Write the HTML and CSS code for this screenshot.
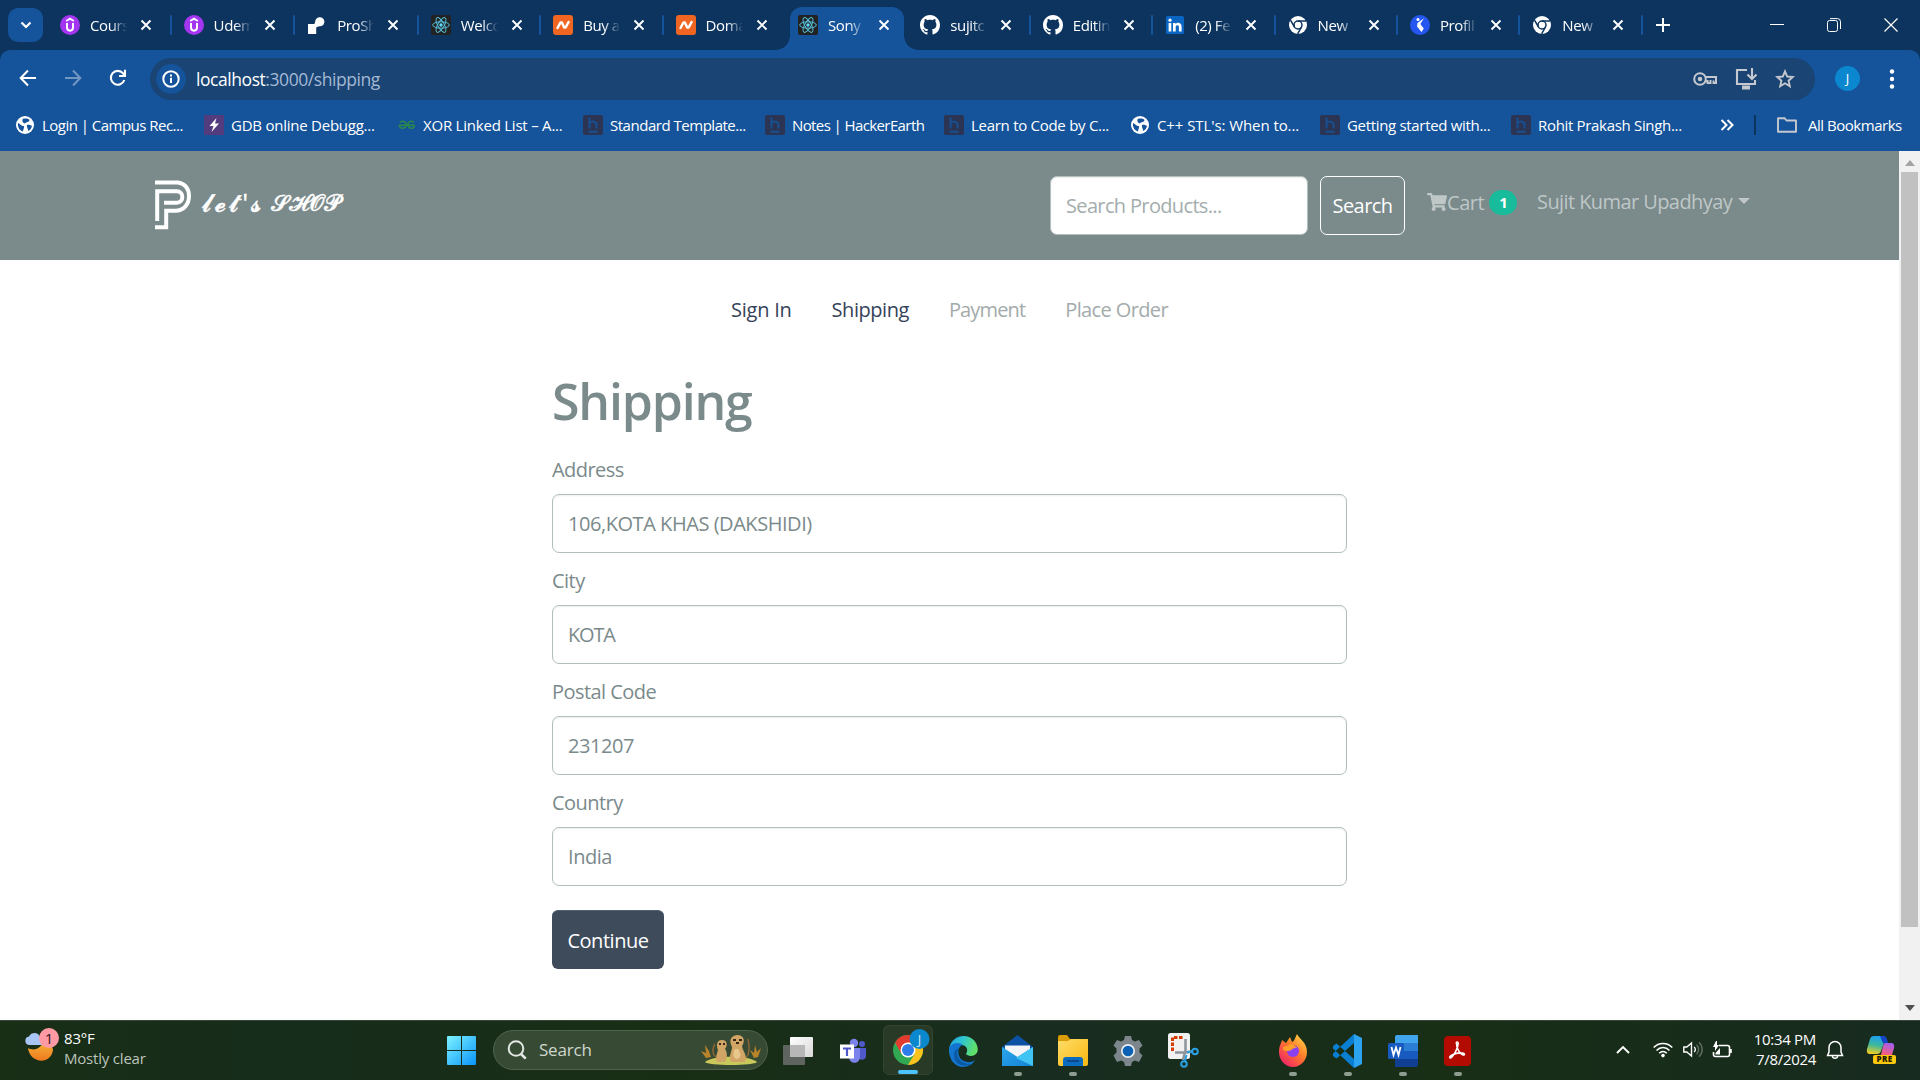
FILE: index.html
```html
<!DOCTYPE html>
<html lang="en">
<head>
<meta charset="utf-8">
<title>Shipping</title>
<link rel="stylesheet" href="styles.css">
</head>
<body>
<svg class="defs" width="0" height="0" aria-hidden="true">
  <defs>
    <linearGradient id="gWin" x1="0" y1="0" x2="1" y2="1"><stop offset="0" stop-color="#7df3ff"/><stop offset="1" stop-color="#0a94f8"/></linearGradient>
    <linearGradient id="gMoon" x1="0" y1="0" x2="0" y2="1"><stop offset="0" stop-color="#f6b73c"/><stop offset="1" stop-color="#ee7a1e"/></linearGradient>
    <linearGradient id="gEdge" x1="0" y1="0" x2="1" y2="0.3"><stop offset="0" stop-color="#1fa0e6"/><stop offset=".5" stop-color="#2fc5cf"/><stop offset="1" stop-color="#5fe06b"/></linearGradient>
    <linearGradient id="gMail" x1="0" y1="0" x2="1" y2="1"><stop offset="0" stop-color="#2aa6ea"/><stop offset="1" stop-color="#1583d6"/></linearGradient>
    <linearGradient id="gFold" x1="0" y1="0" x2="1" y2="1"><stop offset="0" stop-color="#ffdc6a"/><stop offset="1" stop-color="#f8b80f"/></linearGradient>
    <linearGradient id="gFox" x1="1" y1="0" x2="0.2" y2="1"><stop offset="0" stop-color="#ffe74a"/><stop offset=".5" stop-color="#ff7a2a"/><stop offset="1" stop-color="#f0206a"/></linearGradient>
    <linearGradient id="gCopA" x1="0.5" y1="0" x2="0.3" y2="1"><stop offset="0" stop-color="#1ea0f0"/><stop offset=".5" stop-color="#3cb89a"/><stop offset="1" stop-color="#f5cf1e"/></linearGradient>
    <linearGradient id="gCopB" x1="0.7" y1="0" x2="0.3" y2="1"><stop offset="0" stop-color="#a25cf0"/><stop offset="1" stop-color="#f8607a"/></linearGradient>
    <linearGradient id="gTask" x1="0" y1="0" x2="1" y2="1"><stop offset="0" stop-color="#ffffff"/><stop offset="1" stop-color="#d8d8d8"/></linearGradient>
    <symbol id="udemy" viewBox="0 0 20 20"><circle cx="10" cy="10" r="10" fill="#a435f0"/><path d="M6.200 6 10 3.700 13.800 6M7 8v4.600c0 4.100 6 4.100 6 0V8" fill="none" stroke="#fff" stroke-width="2"/></symbol>
    <symbol id="proshop" viewBox="0 0 20 20"><path d="M1 9h6.200C8 8.500 8 7 8.500 5a4.600 4.600 0 1 1 6 6c-2 .6-4.500.4-5.300 1.500V19H1z" fill="#fff"/></symbol>
    <symbol id="react" viewBox="0 0 20 20"><rect width="20" height="20" rx="2" fill="#222"/><g fill="none" stroke="#55bdd8" stroke-width="1"><ellipse cx="10" cy="10" rx="8.300" ry="3.200"/><ellipse cx="10" cy="10" rx="8.300" ry="3.200" transform="rotate(60 10 10)"/><ellipse cx="10" cy="10" rx="8.300" ry="3.200" transform="rotate(120 10 10)"/></g><circle cx="10" cy="10" r="1.700" fill="#61dafb"/></symbol>
    <symbol id="namecheap" viewBox="0 0 20 20"><rect width="20" height="20" rx="3" fill="#f06522"/><path d="M4.500 13 7.500 7.500h1.400l2.300 5h1.400L15.600 7" fill="none" stroke="#fff" stroke-width="2.500" stroke-linecap="round" stroke-linejoin="round"/></symbol>
    <symbol id="github" viewBox="0 0 16 16"><path fill="#fff" d="M8 0C3.580 0 0 3.580 0 8c0 3.540 2.290 6.530 5.470 7.590.4.070.55-.17.55-.38 0-.19-.01-.82-.01-1.490-2.010.37-2.530-.49-2.690-.94-.09-.23-.48-.94-.82-1.130-.28-.15-.68-.52-.01-.53.63-.01 1.080.58 1.230.82.72 1.210 1.870.87 2.330.66.070-.52.28-.87.51-1.070-1.780-.2-3.640-.89-3.640-3.950 0-.87.31-1.590.82-2.150-.08-.2-.36-1.020.08-2.120 0 0 .67-.21 2.200.82.64-.18 1.320-.27 2-.27s1.360.09 2 .27c1.530-1.040 2.200-.82 2.200-.82.44 1.100.16 1.920.08 2.120.51.56.82 1.270.82 2.150 0 3.070-1.870 3.750-3.650 3.950.29.25.54.73.54 1.480 0 1.070-.01 1.930-.01 2.200 0 .21.15.46.55.38A8.010 8.010 0 0 0 16 8c0-4.420-3.580-8-8-8z"/></symbol>
    <symbol id="linkedin" viewBox="0 0 20 20"><rect x="1" y="1" width="18" height="18" rx="1.500" fill="#0a66c2"/><g fill="#fff"><rect x="3.600" y="8" width="2.700" height="8.500"/><circle cx="5" cy="5.200" r="1.600"/><path d="M8 8h2.600v1.200c1.600-2.400 6-1.700 6 2.400v4.900h-2.700v-4.400c0-2.500-3.200-2.300-3.200 0v4.400H8z"/></g></symbol>
    <symbol id="chromew" viewBox="0 0 20 20"><circle cx="10" cy="10" r="9" fill="#fff"/><g fill="none" stroke="#0c345f" stroke-width="1.500"><circle cx="10" cy="10" r="4"/><path d="M10 6h8M6.500 12 2.500 5.200M13.500 12 9.600 18.800"/></g></symbol>
    <symbol id="profile" viewBox="0 0 20 20"><circle cx="10" cy="10" r="10" fill="#2557f0"/><circle cx="8" cy="4.600" r="1.500" fill="#fff"/><path d="M14 3.200 10.300 9l3.500 4.500L11.500 17 7 11.500 7.500 8z" fill="#fff"/></symbol>
    <symbol id="globe" viewBox="0 0 20 20"><circle cx="10" cy="10" r="9" fill="#fff"/><path d="M3 8c2 .5 3 3 6 3.200.5 1.800-.8 2.500-1 5.300C4.500 15.500 2.500 12 3 8zM8 3.600c2 .2 5-.6 6.500 1.400-.3 2.800-3.500 1.500-4.500 3.500C8 8 6.500 6.500 8 3.600zM12 10c1.800-.8 3.800.2 5 1-.6 2.500-2 4.200-4 5 .4-2.400-1.600-3.400-1-6z" fill="#15539a"/></symbol>
    <symbol id="gdb" viewBox="0 0 20 20"><rect width="20" height="20" fill="#533c7d"/><path d="M12.500 3 5.500 11h4L7.500 17l7.500-8.500h-4z" fill="#fff"/></symbol>
    <symbol id="gfg" viewBox="0 0 20 20"><g fill="none" stroke="#2b8a4a" stroke-width="1.500"><path d="M3 7.300c3-2.300 6.500-.3 6 2.800-.6 4-6 4-6.700.2h15.400"/><path d="M17 7.300c-3-2.300-6.500-.3-6 2.800.6 4 6 4 6.700.2"/></g></symbol>
    <symbol id="hack" viewBox="0 0 20 20"><rect width="20" height="20" rx="2" fill="#2c3454"/><path d="M6.500 2.500v11M6.500 8.500c2-3 7-2.300 7 1v4M5.500 16.800h9" fill="none" stroke="#174f91" stroke-width="2"/></symbol>
    <symbol id="x" viewBox="0 0 12 12"><path d="m1.500 1.500 9 9m0-9-9 9" stroke="#fff" stroke-width="1.900" fill="none"/></symbol>
  </defs>
</svg>
<div class="screen">
  <header class="tabstrip">
    <button class="tabsearch" aria-label="tabs"><svg width="12" height="8" viewBox="0 0 12 8"><path d="m1.500 1.500 4.500 4.500 4.500-4.500" fill="none" stroke="#fff" stroke-width="2.200"/></svg></button>
    <div class="tabs">
      <div class="tab"><svg class="fav"><use href="#udemy"/></svg><span class="tname">Cours</span><svg class="close"><use href="#x"/></svg></div>
      <div class="tab"><svg class="fav"><use href="#udemy"/></svg><span class="tname">Udem</span><svg class="close"><use href="#x"/></svg></div>
      <div class="tab"><svg class="fav"><use href="#proshop"/></svg><span class="tname">ProSh</span><svg class="close"><use href="#x"/></svg></div>
      <div class="tab"><svg class="fav"><use href="#react"/></svg><span class="tname">Welco</span><svg class="close"><use href="#x"/></svg></div>
      <div class="tab"><svg class="fav"><use href="#namecheap"/></svg><span class="tname">Buy a</span><svg class="close"><use href="#x"/></svg></div>
      <div class="tab nosep"><svg class="fav"><use href="#namecheap"/></svg><span class="tname">Doma</span><svg class="close"><use href="#x"/></svg></div>
      <div class="tab active"><svg class="fav"><use href="#react"/></svg><span class="tname">Sony</span><svg class="close"><use href="#x"/></svg></div>
      <div class="tab"><svg class="fav"><use href="#github"/></svg><span class="tname">sujitc</span><svg class="close"><use href="#x"/></svg></div>
      <div class="tab"><svg class="fav"><use href="#github"/></svg><span class="tname">Editin</span><svg class="close"><use href="#x"/></svg></div>
      <div class="tab"><svg class="fav"><use href="#linkedin"/></svg><span class="tname">(2) Fe</span><svg class="close"><use href="#x"/></svg></div>
      <div class="tab"><svg class="fav"><use href="#chromew"/></svg><span class="tname">New</span><svg class="close"><use href="#x"/></svg></div>
      <div class="tab"><svg class="fav"><use href="#profile"/></svg><span class="tname">Profil</span><svg class="close"><use href="#x"/></svg></div>
      <div class="tab"><svg class="fav"><use href="#chromew"/></svg><span class="tname">New</span><svg class="close"><use href="#x"/></svg></div>
    </div>
    <svg class="newtab" width="14" height="14" viewBox="0 0 14 14"><path d="M7 0v14M0 7h14" stroke="#fff" stroke-width="2"/></svg>
    <div class="wincontrols">
      <svg width="14" height="14" viewBox="0 0 14 14"><path d="M0 6.500h14" stroke="#fff"/></svg>
      <svg width="14" height="14" viewBox="0 0 14 14" fill="none" stroke="#fff"><rect x=".5" y="2.500" width="10" height="11" rx="2"/><path d="M3 .6h7.500a3 3 0 0 1 3 3V11"/></svg>
      <svg width="14" height="14" viewBox="0 0 14 14"><path d="m.5.5 13 13m0-13-13 13" stroke="#fff" stroke-width="1.200"/></svg>
    </div>
  </header>
  <section class="chrome">
    <div class="toolbar">
      <div class="navbtns">
        <svg width="18" height="18" viewBox="0 0 18 18" fill="none" stroke="#fff" stroke-width="2"><path d="M17 9H2M9 1.500 1.700 9 9 16.500"/></svg>
        <svg width="18" height="18" viewBox="0 0 18 18" fill="none" stroke="#7496c2" stroke-width="2"><path d="M1 9h15M9 1.500 16.300 9 9 16.500"/></svg>
        <svg width="18" height="18" viewBox="0 0 18 18" fill="none" stroke="#fff" stroke-width="2.100"><path d="M15.300 11A6.900 6.900 0 1 1 14 4.300L16 6.500M16 .8V7h-6"/></svg>
      </div>
      <div class="omnibox">
        <span class="info"><svg width="18" height="18" viewBox="0 0 18 18"><circle cx="9" cy="9" r="7.700" fill="none" stroke="#fff" stroke-width="2"/><path d="M9 7.800V13M9 4.600v2" stroke="#fff" stroke-width="2"/></svg></span>
        <span class="url">localhost<i>:3000/shipping</i></span>
        <div class="omniicons">
          <svg width="24" height="16" viewBox="0 0 24 16" fill="none" stroke="#c5c9cf" stroke-width="2"><circle cx="7" cy="8" r="5.800"/><path d="M12.500 6H23v6h-2.500V9.500M17.500 9v3h-3v-2h-2"/><circle cx="7" cy="8" r="2.300" fill="#c5c9cf" stroke="none"/></svg>
          <svg width="22" height="22" viewBox="0 0 22 22" fill="none" stroke="#c5c9cf" stroke-width="2.100"><path d="M12 2H2v14h18v-4"/><path d="M7 19.500h8" stroke-width="4"/><path d="M17 0v10M12.500 6.500 17 11l4.500-4.500"/></svg>
          <svg width="20" height="20" viewBox="0 0 20 20"><path d="m10 2.300 2.200 5.200 5.600.5-4.200 3.700 1.200 5.600-4.800-3-4.800 3 1.200-5.600L2.200 8l5.600-.5z" fill="none" stroke="#c5c9cf" stroke-width="1.900"/></svg>
        </div>
      </div>
      <span class="avatar">J</span>
      <svg class="dots" width="6" height="22" viewBox="0 0 6 22" fill="#fff"><circle cx="3" cy="3.500" r="2.200"/><circle cx="3" cy="11" r="2.200"/><circle cx="3" cy="18.500" r="2.200"/></svg>
    </div>
    <nav class="bookmarks">
      <span class="bm b1"><svg><use href="#globe"/></svg>Login | Campus Rec...</span>
      <span class="bm b2"><svg><use href="#gdb"/></svg>GDB online Debugg...</span>
      <span class="bm b3"><svg><use href="#gfg"/></svg>XOR Linked List – A...</span>
      <span class="bm b4"><svg><use href="#hack"/></svg>Standard Template...</span>
      <span class="bm b5"><svg><use href="#hack"/></svg>Notes | HackerEarth</span>
      <span class="bm b6"><svg><use href="#hack"/></svg>Learn to Code by C...</span>
      <span class="bm b7"><svg><use href="#globe"/></svg>C++ STL's: When to...</span>
      <span class="bm b8"><svg><use href="#hack"/></svg>Getting started with...</span>
      <span class="bm b9"><svg><use href="#hack"/></svg>Rohit Prakash Singh...</span>
      <svg class="more" viewBox="0 0 14 12"><path d="m1.500 1 5 5-5 5M7.500 1l5 5-5 5" fill="none" stroke="#fff" stroke-width="2"/></svg>
      <span class="bsep"></span>
      <span class="bm all"><svg viewBox="0 0 20 16"><path d="M1 1.200h6.500l2 2.300H19v11.300H1z" fill="none" stroke="#c5c9cf" stroke-width="1.900" stroke-linejoin="round"/></svg>All Bookmarks</span>
    </nav>
  </section>
  <main class="viewport">
    <div class="page">
      <div class="navbar">
        <div class="brand">
          <svg width="37" height="51" viewBox="0 0 37 51" fill="none" stroke="#fff" stroke-width="4"><path d="M0 3.500h23c8 1.300 11 7.300 11 13.600 0 8.700-5.600 14.700-13.400 14.700H11.200v16.500H0"/><path d="M2.200 42V12.300h19.500c7.500 0 7.500 11.500 0 11.500H9"/></svg>
          <span class="brandname"><span class="lets">𝓵𝓮𝓽'𝓼</span><span class="shop">𝓢𝓗𝓞𝓟</span></span>
        </div>
        <div class="navright">
          <span class="field searchbox">Search Products...</span>
          <button class="searchbtn">Search</button>
          <span class="cart"><svg width="20" height="18" viewBox="0 0 576 512"><path fill="#bfc7c7" d="M528.120 301.319l47.273-208C578.806 78.301 567.391 64 551.990 64H159.208l-9.166-44.810C147.758 8.021 137.930 0 126.529 0H24C10.745 0 0 10.745 0 24v16c0 13.255 10.745 24 24 24h69.883l70.248 343.435C147.325 417.100 136 435.222 136 456c0 30.928 25.072 56 56 56s56-25.072 56-56c0-15.674-6.447-29.835-16.824-40h209.647C430.447 426.165 424 440.326 424 456c0 30.928 25.072 56 56 56s56-25.072 56-56c0-22.172-12.888-41.332-31.579-50.405l5.517-24.276c3.413-15.018-8.002-29.319-23.403-29.319H218.117l-6.545-32h293.145c11.206 0 20.920-7.754 23.403-18.681z"/></svg>Cart<b>1</b></span>
          <span class="user">Sujit Kumar Upadhyay<i></i></span>
        </div>
      </div>
      <div class="steps"><span class="s1">Sign In</span><span>Shipping</span><span class="off s3">Payment</span><span class="off s4">Place Order</span></div>
      <div class="form">
        <h1>Shipping</h1>
        <label>Address</label><div class="field">106,KOTA KHAS (DAKSHIDI)</div>
        <label>City</label><div class="field tight">KOTA</div>
        <label>Postal Code</label><div class="field">231207</div>
        <label>Country</label><div class="field">India</div>
        <button class="continue">Continue</button>
      </div>
    </div>
    <div class="scrollbar">
      <svg width="10" height="6" viewBox="0 0 10 6"><path d="M0 6h10L5 0z" fill="#a3a3a3"/></svg>
      <div class="thumb"></div>
      <svg width="10" height="6" viewBox="0 0 10 6"><path d="M0 0h10L5 6z" fill="#505050"/></svg>
    </div>
  </main>
  <footer class="taskbar">
    <div class="weather">
      <svg width="36" height="36" viewBox="0 0 36 36"><path d="M5 21c7 4 15-1 15-8 5 1 10 6 10 10-2 15-23 14-25-2z" fill="url(#gMoon)"/><path d="M6 18a4.300 4.300 0 0 1 0-8.500C8 5 15 5 16.500 9c7 0 6 9 1 9z" fill="#a9c5f5"/><circle cx="26" cy="11" r="10" fill="#ff99a4"/><text x="26" y="16.500" text-anchor="middle" class="badge">1</text></svg>
      <div><p>83°F</p><p class="dim">Mostly clear</p></div>
    </div>
    <div class="apps">
      <span class="app start"><svg width="29" height="29" viewBox="0 0 29 29" fill="url(#gWin)"><path d="M0 1q0-1 1-1h13v14H0zM15 0h13q1 0 1 1v13H15zM0 15h14v14H1q-1 0-1-1zM15 15h14v13q0 1-1 1H15z"/></svg></span>
      <div class="search">
        <svg width="20" height="20" viewBox="0 0 20 20" fill="none" stroke="#e4e8e4" stroke-width="2"><circle cx="9" cy="8.500" r="7.300"/><path d="m14 14 4.700 4.700" stroke-width="2.600"/></svg>
        <span>Search</span>
        <svg class="meerkat" width="62" height="34" viewBox="0 0 62 34"><path d="M5 29c8-7 44-7 52 0-2 4-50 4-52 0z" fill="#c9c95b"/><path d="M46 25c5-5 3-14 2-19M16 24c-5-4-3-10-1-13" fill="none" stroke="#8b6534" stroke-width="1.500"/><path d="M6 25 1 18l5 2-1-8 4 6 2 6zM54 25l-4-8 4 3 1-8 2 7 4-4-3 9z" fill="#b9832a"/><path d="M17 29c-2-4 0-8 1-12-2-5-1-10 4-10s6 5 3 9c3 4 2 10 0 13zM31 29c-3-6 1-10 1-15-3-6-2-11 5-12 8 0 8 7 5 11 1 6 6 10 3 16z" fill="#d0a566"/><path d="M33 7h3m3 0h3M19 11h2m2 0h2M36 10h3" stroke="#3b2719" stroke-width="2"/><path d="M35 16c-3 5-2 9 2 10 5-2 4-6 1-10z" fill="#e8c68c"/></svg>
      </div>
      <span class="app taskview"><svg width="30" height="28" viewBox="0 0 30 28"><rect y="8" width="22" height="20" rx="1" fill="#606460"/><rect x="7" width="23" height="20" rx="1" fill="url(#gTask)"/><path d="M7 8h15v12H7z" fill="#b7b7b7"/></svg></span>
      <span class="app"><svg width="28" height="26" viewBox="0 0 28 26"><circle cx="15" cy="5" r="4.200" fill="#7b83eb"/><circle cx="23" cy="6" r="3" fill="#5059c9"/><path d="M19 10h8v8c0 5-8 5-8 0z" fill="#5059c9"/><path d="M10 10h11v9c0 7-10 8-11 1z" fill="#7b83eb"/><rect x="1" y="6.500" width="14" height="14" fill="#fff"/><path d="M4 9.500h8v2H9.100V18H6.900v-6.500H4z" fill="#5059c9"/></svg></span>
      <span class="app on"><svg width="38" height="38" viewBox="0 0 38 38"><circle cx="16" cy="21" r="15" fill="#31a952"/><path d="M3 13.500A15 15 0 0 1 29 13.500L16 15z" fill="#e33b2e"/><path d="M3 13.500 9.500 25 16 21V13.500z" fill="#e33b2e"/><path d="M29 13.500A15 15 0 0 1 16 36l6.500-11L16 13.500z" fill="#fcc31e"/><circle cx="16" cy="21" r="7.500" fill="#fff"/><circle cx="16" cy="21" r="6" fill="#2f7de9"/><circle cx="27.500" cy="10" r="10" fill="#0b87cd"/><text x="27.500" y="15" text-anchor="middle" class="javatar">J</text></svg></span>
      <span class="app"><svg width="30" height="32" viewBox="0 0 30 32"><path d="M1 14C3 3 13-1 21 2c8 3 11 13 7 17-3 3-9 2-10 0 3-5 0-9-5-9C7 9 3 14 1 19z" fill="url(#gEdge)"/><path d="M1 13c3-6 11-6 14-3-5 1-6 8-3 13 3 4 10 6 15 2-5 9-16 8-20 4-5-4-6-10-6-16z" fill="#1275cf"/><path d="M11 13c-5 6 0 17 13 16-8 4-18 1-18-9 0-4 2-6 5-7z" fill="#0c59a4"/></svg></span>
      <span class="app run"><svg width="31" height="32" viewBox="0 0 31 32"><path d="M0 12 15.500 0 31 12v6H0z" fill="#0b52a4"/><path d="M3 10.500h25V22H3z" fill="#f3f5f8"/><path d="M0 12v19h31V12L15.500 22z" fill="url(#gMail)"/><path d="m31 12-17 11 17 8z" fill="#40c4f4"/></svg></span>
      <span class="app run"><svg width="30" height="31" viewBox="0 0 30 31"><path d="M0 2q0-2 2-2h7l3 4h16v6H0z" fill="#d99b06"/><path d="M0 6h10l3-2h17v25q0 2-2 2H2q-2 0-2-2z" fill="url(#gFold)"/><path d="M5 31v-6q0-3 3-3h14q3 0 3 3v6z" fill="#0b6cbf"/><path d="M9 26h12" stroke="#0a4a8c" stroke-width="2"/></svg></span>
      <span class="app"><svg width="30" height="30" viewBox="0 0 30 30"><path d="M12 0h6l1 4 3 1.500 4-1.500 3.500 5.500-3 3v4l3 3L26 26l-4-1.500L19 26l-1 4h-6l-1-4-3-1.500L4 26 .5 19.500l3-3v-4l-3-3L4 4l4 1.500L11 4z" fill="#7d868d"/><circle cx="15" cy="15" r="7" fill="#e9edf0"/><circle cx="15" cy="15" r="5.300" fill="#0b62b4"/></svg></span>
      <span class="app snip"><svg width="32" height="36" viewBox="0 0 32 36"><rect x="1" y="1" width="22" height="26" rx="2.500" fill="#f1f1f1"/><path d="M5.500 19V5.500H17" fill="none" stroke="#d83b01" stroke-width="3" stroke-dasharray="3.500 1.500"/><path d="M18.500 7v13.500H8M18 20l-2 8M18.500 20.500 26 19" stroke="#8b9299" stroke-width="2.500" fill="none"/><g fill="none" stroke="#2a9fe3" stroke-width="2"><circle cx="28" cy="19.500" r="2.800"/><circle cx="17" cy="32" r="2.800"/><path d="m20 20.500 5-1M18 29l1.500-6"/></g></svg></span>
      <span class="app"></span>
      <span class="app run"><svg width="30" height="33" viewBox="0 0 30 33"><path d="M1 18C1 12 3 10 4 6l4 3 4-6 2 5c2 0 3-4 5-8 2 5 10 8 10 18 0 8-6 15-14 15S1 26 1 18z" fill="url(#gFox)"/><circle cx="15" cy="17" r="6" fill="#8a3ff0"/><path d="M9 12c5-4 8 0 10 2-4-1-5 3-9 3-5 0-5-2-5-4z" fill="#ff9e2c"/></svg></span>
      <span class="app run"><svg width="31" height="34" viewBox="0 0 31 34"><path d="M22 0 30 4v26l-8 4z" fill="#2ba3f0"/><path d="M22 0v9L4.500 24.500 1 22v-2.500zM22 34v-9L4.500 9.500 1 12v2.500z" fill="#0a7fd2"/></svg></span>
      <span class="app run"><svg width="30" height="32" viewBox="0 0 30 32"><path d="M7 2q0-2 2-2h21v8H7z" fill="#41a5ee"/><path d="M7 8h23v8H7z" fill="#2b7cd3"/><path d="M7 16h23v8H7z" fill="#185abd"/><path d="M7 24h23v6q0 2-2 2H7z" fill="#103f91"/><rect y="8" width="16" height="16" rx="1.500" fill="#185abd"/><path d="m3.500 12 2 8L8 12.500l2.500 7.500 2-8" fill="none" stroke="#fff" stroke-width="1.800"/></svg></span>
      <span class="app run"><svg width="27" height="30" viewBox="0 0 27 30"><rect width="27" height="30" rx="4" fill="#b30b00"/><path d="M12.500 7.500c-1-2 2-2.300 1.700.3-.4 5-4.500 12-7.200 14-2 .5-1.700-1.500 1-2.800 3.500-1.600 9-2.500 11.500-1.700 2.500 1.500-.5 3-3-.2-2-2-3.700-6-4-9.600z" fill="none" stroke="#fff" stroke-width="1.600"/></svg></span>
    </div>
    <div class="tray">
      <svg class="chev" width="14" height="9" viewBox="0 0 14 9"><path d="m1 8 6-6 6 6" fill="none" stroke="#fff" stroke-width="1.900"/></svg>
      <svg class="wifi" width="20" height="16" viewBox="0 0 20 16" fill="none" stroke="#fff" stroke-width="1.500"><path d="M.7 5.500c5-5.500 13.600-5.500 18.600 0M3.500 8.400c3.800-4 9.200-4 13 0M6.200 11.200c2.300-2.300 5.300-2.300 7.600 0"/><circle cx="10" cy="13.600" r="1.800" fill="#fff" stroke="none"/></svg>
      <svg class="vol" width="20" height="17" viewBox="0 0 20 17" fill="none" stroke="#fff" stroke-width="1.400"><path d="M.8 6v5h3L8.500 15V2L3.800 6z"/><path d="M11.200 6c1.500 1.500 1.500 3.500 0 5"/><path d="M13.600 3.700c2.700 2.800 2.700 6.800 0 9.600M16 1.200c4.200 4.200 4.200 10.400 0 14.600" stroke="#607060"/></svg>
      <svg class="bat" width="21" height="18" viewBox="0 0 21 18"><path d="M7 4.500h8.500q2 0 2 2v7q0 2-2 2h-12q-2 0-2-2V11M19 8v4" fill="none" stroke="#fff" stroke-width="1.600"/><path d="M4 0 1 6h2v4l4-6H5V0zM3.500 13.500V12L8 7v6.500z" fill="#fff"/></svg>
      <div class="clock"><p>10:34 PM</p><p>7/8/2024</p></div>
      <svg class="bell" width="18" height="20" viewBox="0 0 18 20" fill="none" stroke="#fff" stroke-width="1.500"><path d="M1.500 15.500 3 12V7.500a6 6 0 0 1 12 0V12l1.500 3.500zM6.300 16c.5 3 4.900 3 5.400 0"/></svg>
      <svg class="copilot" width="30" height="29" viewBox="0 0 30 29"><path d="M8 1h9q3 0 2 4l-4 11q-1 3-4 3H4q-4 0-3-5L4 4q1-3 4-3z" fill="url(#gCopA)"/><path d="M14 1h4q2 0 3 3l1 4h-5z" fill="#1745c8"/><path d="M19 8h6q4 0 3 5l-2 7H15l2-9q1-3 2-3z" fill="url(#gCopB)"/><rect x="7" y="20" width="23" height="9" rx="2" fill="#ffc80a"/><text x="18.500" y="27.300" text-anchor="middle" class="pre">PRE</text></svg>
    </div>
  </footer>
</div>
</body>
</html>
```
FILE: styles.css
```css
* { box-sizing: border-box; }
body { margin: 0; font-family: "Open Sans", "Noto Sans", sans-serif; overflow: hidden; }
p, h1 { margin: 0; }
i { font-style: normal; }
button { font: inherit; border: 0; padding: 0; }
svg { display: block; flex: none; }
.defs { position: absolute; }
.screen { width: 1920px; height: 1080px; display: flex; flex-direction: column; background: #0c345f; }

/* browser tab strip */
.tabstrip { height: 50px; flex: none; display: flex; align-items: center; padding-left: 8px; background: #0c345f; }
.tabsearch { width: 35px; height: 34px; border-radius: 10px; background: #15539a; display: grid; place-items: center; margin-right: 5px; }
.tabs { display: grid; grid-template-columns: repeat(3, 123.600px) repeat(10, 122.400px); height: 50px; }
.tab { position: relative; display: flex; align-items: center; padding: 0 0 0 12px; color: #fff; font-size: 15px; letter-spacing: -0.4px; }
.tab::after { content: ""; position: absolute; right: 0; top: 15px; width: 2px; height: 20px; background: #15539a; border-radius: 1px; }
.tab.nosep::after { display: none; }
.fav { width: 20px; height: 20px; margin-right: 10px; }
.tname { width: 38px; white-space: nowrap; mask-image: linear-gradient(90deg, #000 55%, transparent 98%); }
.close { width: 12px; height: 12px; margin-left: 12px; }
.tab.active > * { z-index: 1; }
.tab.active::before { content: ""; position: absolute; left: 4px; right: 4px; top: 7px; bottom: 0; border-radius: 12px 12px 0 0; background: #15539a; }
.tab.active::after { left: -10px; right: -10px; top: auto; bottom: 0; width: auto; height: 14px; border-radius: 0; background: radial-gradient(circle at 0 0, transparent 13.500px, #15539a 14px) left / 14px 14px no-repeat, radial-gradient(circle at 100% 0, transparent 13.500px, #15539a 14px) right / 14px 14px no-repeat; }
.newtab { margin-left: 13px; }
.wincontrols { display: flex; gap: 43px; margin-left: auto; padding-right: 22px; }

/* toolbar */
.chrome { height: 101px; flex: none; background: #15539a; border-radius: 10px 10px 0 0; padding-top: 8px; }
.toolbar { height: 42px; display: flex; align-items: center; }
.navbtns { display: flex; width: 150px; gap: 27px; padding-left: 19px; margin-top: -2px; }
.omnibox { width: 1665px; height: 42px; border-radius: 21px; background: #194473; display: flex; align-items: center; padding-left: 6px; }
.info { width: 30px; height: 30px; border-radius: 50%; background: #15539a; display: grid; place-items: center; margin-right: 10px; }
.url { color: #fff; font-size: 17.500px; letter-spacing: -0.44px; }
.url i { color: #a5b9d3; }
.omniicons { margin-left: auto; display: flex; align-items: center; gap: 18px; padding-right: 20px; }
.avatar { width: 25px; height: 25px; border-radius: 50%; background: #0b87d0; color: #fff; font-size: 13px; display: grid; place-items: center; margin: -2px 0 0 20px; }
.dots { margin-left: 29px; }
.bookmarks { height: 49px; display: grid; grid-template-columns: 189px 193px 186px 182px 179px 186px 190px 191px 209px 34px 23px 1fr; align-items: center; padding-left: 15px; color: #fff; font-size: 15px; }
.bm { display: flex; align-items: center; gap: 7px; white-space: nowrap; letter-spacing: -0.48px; }
.b1 { letter-spacing: -0.52px; }
.b2 { letter-spacing: -0.24px; }
.b3 { letter-spacing: -0.22px; gap: 6px; }
.b5 { letter-spacing: -0.6px; }
.b6 { letter-spacing: -0.28px; }
.b7 { letter-spacing: -0.08px; }
.b8, .b9 { letter-spacing: -0.32px; }
.bm svg { width: 20px; height: 20px; }
.more { width: 14px; height: 12px; }
.bsep { width: 2px; height: 20px; background: #0c345f; }
.bm.all { gap: 11px; }
.bm.all svg { height: 16px; }

/* shop page */
.viewport { height: 869px; flex: none; display: flex; background: #fff; }
.page { flex: 1; color: #7b8a8b; font-size: 20px; letter-spacing: -0.45px; }
.navbar { height: 109px; background: #7b8a8b; display: flex; justify-content: space-between; padding: 25px 149px 0 155px; }
.brand { display: flex; gap: 10px; padding-top: 3px; }
.brandname { display: flex; gap: 5px; color: #fff; font-size: 25px; line-height: 46px; white-space: nowrap; -webkit-text-stroke: 0.400px #fff; }
.lets { width: 64px; letter-spacing: 3.200px; }
.shop { font-size: 23px; letter-spacing: 0; }
.navright { display: flex; align-items: flex-start; }
.field { height: 59px; border: 1px solid #b1bfbd; border-radius: 7px; background: #fff; padding: 0 15px; line-height: 58px; color: #7b8a8b; box-shadow: inset 0 1px 2px rgba(0,0,0,.07); white-space: nowrap; }
.tight { letter-spacing: -1.200px; }
.searchbox { width: 258px; color: #a3adad; margin-right: 12px; letter-spacing: -0.65px; }
.searchbtn { width: 85px; height: 59px; border: 1px solid #fff; border-radius: 7px; background: none; color: #fff; letter-spacing: -0.55px; margin-right: 22px; }
.cart { width: 110px; height: 52px; display: flex; align-items: center; color: #bfc7c7; }
.cart b { width: 28px; height: 25px; border-radius: 13px; background: #18bc9c; color: #fff; font-size: 15px; display: grid; place-items: center; margin-left: 5px; }
.user { width: 213px; height: 50px; display: flex; align-items: center; color: #bfc7c7; white-space: nowrap; letter-spacing: -0.58px; }
.user i { border: 6px solid transparent; border-top-color: #bfc7c7; border-bottom: 0; margin-left: auto; }
.steps { display: flex; justify-content: center; gap: 40px; padding-top: 36px; line-height: 28px; color: #35435a; height: 98px; }
.steps .off { color: #a3abab; }
.steps .s1 { letter-spacing: -0.22px; }
.steps .s3 { letter-spacing: -0.85px; }
.steps .s4 { letter-spacing: -0.62px; }
.form { width: 795px; margin: 0 auto; }
.form h1 { font-size: 50px; font-weight: 600; line-height: 60px; letter-spacing: -1.150px; padding-top: 13px; height: 97px; }
.form label { display: block; height: 39px; line-height: 30px; letter-spacing: -0.55px; }
.form .field { margin-bottom: 13px; height: 59px; }
.continue { width: 112px; height: 59px; border-top: 1px solid #51606f; border-radius: 6px; background: #3d4b5b; color: #fff; letter-spacing: -0.45px; margin-top: 11px; }
.scrollbar { width: 21px; background: #f1f1f1; display: flex; flex-direction: column; align-items: center; padding: 9px 0; }
.thumb { width: 17px; height: 755px; background: #c1c1c1; margin: 6px 0 auto; }

/* desktop taskbar */
.taskbar { height: 60px; flex: none; display: flex; align-items: center; background: linear-gradient(90deg, #182e15, #172d1c 15%, #182e14 35%, #182d20 55%, #182e15 75%, #182b20); border-top: 1px solid #38483a; color: #fff; font-size: 15px; letter-spacing: -0.2px; }
.weather { width: 434px; display: flex; padding-left: 23px; gap: 5px; line-height: 20px; margin-top: -5px; }
.weather svg { margin-top: -1px; }
.dim { color: #bcc4bb; }
.badge { font-size: 15px; fill: #30151a; }
.apps { display: flex; align-items: center; height: 59px; }
.app { position: relative; width: 55px; height: 50px; display: grid; place-items: center; border-radius: 6px; }
.app.run::after, .app.on::after { content: ""; position: absolute; bottom: 0; left: 24px; width: 8px; height: 4px; border-radius: 2px; background: #8f9c90; }
.app.on { width: 50px; margin: -1px 2.500px 0; background: #293b27; border: 1px solid #33452f; }
.app.on::after { left: 14px; width: 20px; background: #4cc2ff; }
.app.on svg { margin: -5px 0 0 6px; }
.app.snip svg { margin-top: -2px; }
.app.taskview { margin-left: 2px; }
.search { width: 275px; height: 40px; border-radius: 20px; background: #374b34; border: 1px solid #50624d; margin: -2px 0 0 4px; display: flex; align-items: center; padding: 0 5px 0 13px; font-size: 17px; color: #cfd6ce; }
.search span { margin-left: 12px; }
.meerkat { margin-left: auto; }
.javatar { font-size: 13px; fill: #cfe8f8; }
.tray { margin-left: auto; display: flex; align-items: center; padding-right: 24px; }
.tray > svg { margin-top: -2px; }
.tray .chev { margin-right: 23px; }
.tray .wifi { margin-right: 10px; }
.tray .vol { margin-right: 9px; }
.tray .bat { margin-right: 20px; }
.clock { width: 63px; display: flex; flex-direction: column; align-items: flex-end; line-height: 20px; letter-spacing: -0.3px; white-space: nowrap; margin-top: -3px; }
.tray .bell { margin: -2px 22px 0 10px; }
.pre { font-size: 8px; font-weight: 800; fill: #241c00; letter-spacing: 0.4px; }
```
